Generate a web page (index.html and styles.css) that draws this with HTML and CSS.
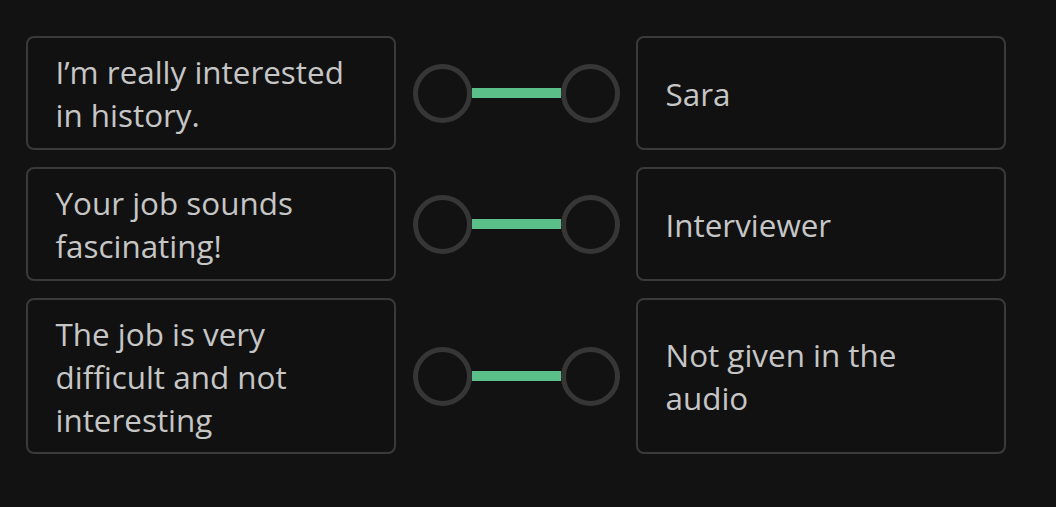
FILE: index.html
```html
<!DOCTYPE html>
<html lang="en">
<head>
<meta charset="utf-8">
<link rel="stylesheet" href="styles.css">
</head>
<body>
<div class="match">
  <div class="row">
    <div class="card">I’m really interested in history.</div>
    <div class="link"><span class="dot"></span><span class="bar"></span><span class="dot"></span></div>
    <div class="card">Sara</div>
  </div>
  <div class="row">
    <div class="card">Your job sounds fascinating!</div>
    <div class="link"><span class="dot"></span><span class="bar"></span><span class="dot"></span></div>
    <div class="card">Interviewer</div>
  </div>
  <div class="row">
    <div class="card">The job is very difficult and not interesting</div>
    <div class="link"><span class="dot"></span><span class="bar"></span><span class="dot"></span></div>
    <div class="card">Not given in the audio</div>
  </div>
</div>
</body>
</html>
```
FILE: styles.css
```css
html, body {
  margin: 0;
  background: #121212;
}
body {
  font-family: "Open Sans", "Liberation Sans", sans-serif;
  color: #c6c6c6;
}
.match {
  padding: 36px 0 0 26px;
  display: flex;
  flex-direction: column;
  gap: 17px;
}
.row {
  display: flex;
  align-items: stretch;
}
.card {
  box-sizing: border-box;
  width: 370px;
  min-height: 114px;
  border: 2.5px solid #3a3a3a;
  border-radius: 8px;
  background: #111111;
  padding: 11.5px 38px 11.5px 27.5px;
  font-size: 31.4px;
  line-height: 43px;
  display: flex;
  align-items: center;
}
.link {
  width: 240px;
  display: flex;
  align-items: center;
  padding-left: 17px;
  box-sizing: border-box;
}
.dot {
  width: 59px;
  height: 59px;
  box-sizing: border-box;
  border: 5.5px solid #363636;
  border-radius: 50%;
  flex: none;
}
.bar {
  width: 89px;
  height: 10px;
  background: #5bbf89;
  flex: none;
}
```
